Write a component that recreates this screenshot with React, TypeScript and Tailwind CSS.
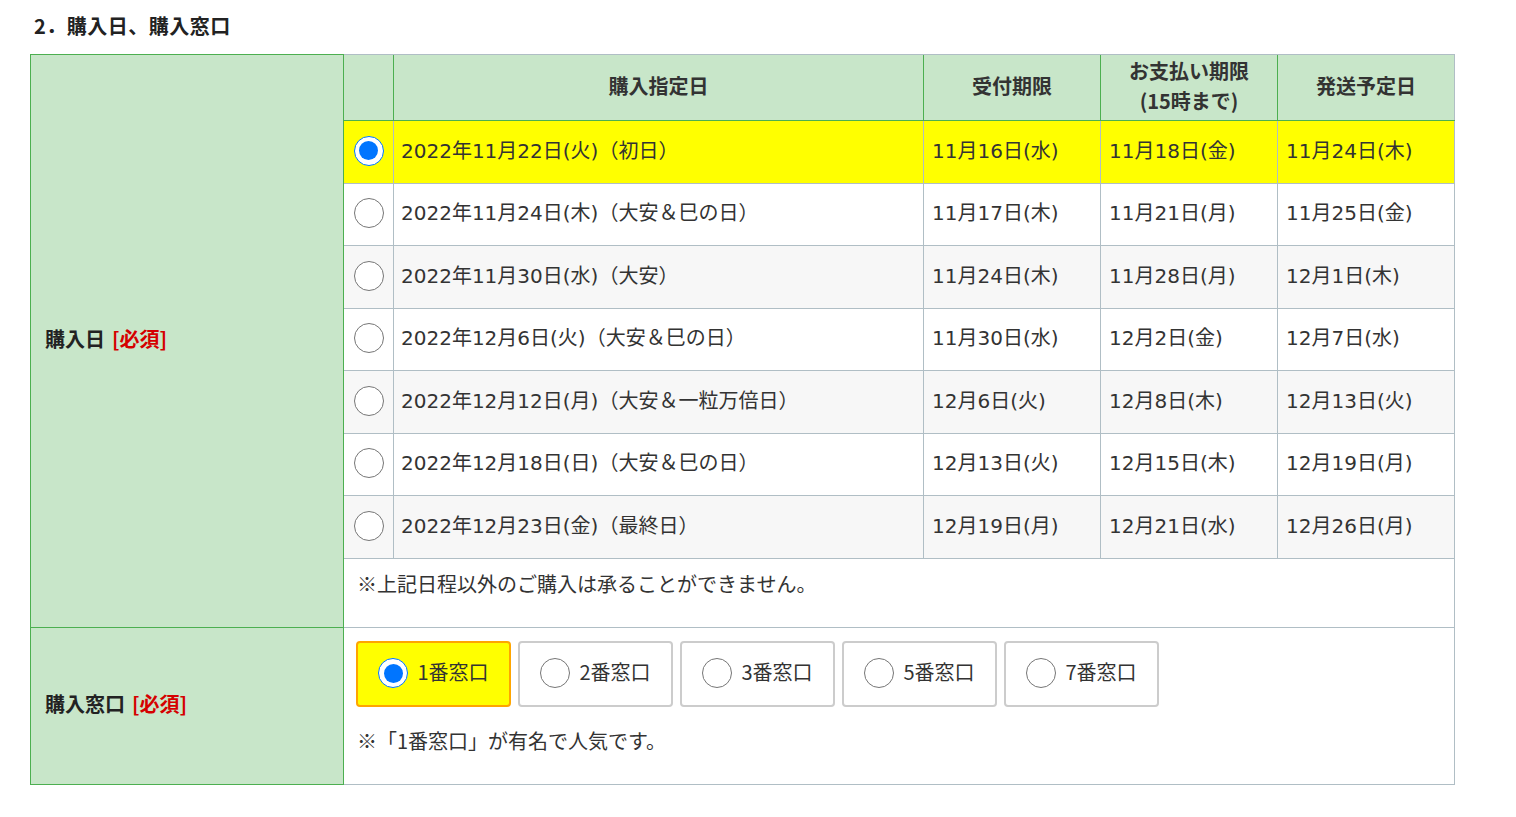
import React from "react";

const FONT = { fontFamily: '"Noto Sans CJK JP", "Noto Sans", sans-serif' };
const CELLFONT = { fontFamily: '"DejaVu Sans", "Noto Sans CJK JP", sans-serif' };

function Radio({ checked }: { checked: boolean }) {
  if (checked) {
    return (
      <div className="w-[30px] h-[30px] rounded-full border-[1.5px] border-[#0075ff] bg-white flex items-center justify-center shrink-0">
        <div className="w-[19px] h-[19px] rounded-full bg-[#0075ff]" />
      </div>
    );
  }
  return <div className="w-[30px] h-[30px] rounded-full border-[1.5px] border-[#767676] bg-white shrink-0" />;
}

const rows = [
  { d: "2022年11月22日(火)（初日）", a: "11月16日(水)", b: "11月18日(金)", c: "11月24日(木)", h: "h-[63px]", bg: "bg-[#ffff00]", sel: true },
  { d: "2022年11月24日(木)（大安＆巳の日）", a: "11月17日(木)", b: "11月21日(月)", c: "11月25日(金)", h: "h-[62px]", bg: "bg-white", sel: false },
  { d: "2022年11月30日(水)（大安）", a: "11月24日(木)", b: "11月28日(月)", c: "12月1日(木)", h: "h-[63px]", bg: "bg-[#f7f7f7]", sel: false },
  { d: "2022年12月6日(火)（大安＆巳の日）", a: "11月30日(水)", b: "12月2日(金)", c: "12月7日(水)", h: "h-[62px]", bg: "bg-white", sel: false },
  { d: "2022年12月12日(月)（大安＆一粒万倍日）", a: "12月6日(火)", b: "12月8日(木)", c: "12月13日(火)", h: "h-[63px]", bg: "bg-[#f7f7f7]", sel: false },
  { d: "2022年12月18日(日)（大安＆巳の日）", a: "12月13日(火)", b: "12月15日(木)", c: "12月19日(月)", h: "h-[62px]", bg: "bg-white", sel: false },
  { d: "2022年12月23日(金)（最終日）", a: "12月19日(月)", b: "12月21日(水)", c: "12月26日(月)", h: "h-[63px]", bg: "bg-[#f7f7f7]", sel: false },
];

const windows = ["1番窓口", "2番窓口", "3番窓口", "5番窓口", "7番窓口"];

export default function App() {
  return (
    <div className="bg-white w-[1516px] h-[817px] text-[#333]" style={FONT}>
      <div className="pt-[11px] pl-[34px] text-[20px] font-bold leading-[30px] text-[#222] tracking-[0.5px]">2．購入日、購入窓口</div>
      <div className="ml-[30px] mt-[13px] w-[1425px] flex flex-col">
        {/* Row A */}
        <div className="flex">
          <div className="w-[314px] border border-[#4caf50] bg-[#c8e6c9] flex items-center pl-[14px] pb-[4px] text-[20px] font-bold text-[#222]">
            購入日<span className="ml-[7px] text-[#d50000]">[必須]</span>
          </div>
          <div className="w-[1111px] flex flex-col border-t border-[#b0bec5] text-[20px]">
            <div className="flex h-[66px] bg-[#c8e6c9] border-b border-[#4caf50] font-bold text-[#333]">
              <div className="w-[50px] border-r border-[#4caf50]" />
              <div className="w-[530px] border-r border-[#4caf50] flex items-center justify-center pb-[4px]">購入指定日</div>
              <div className="w-[177px] border-r border-[#4caf50] flex items-center justify-center pb-[4px]">受付期限</div>
              <div className="w-[177px] border-r border-[#4caf50] flex flex-col items-center justify-center leading-[30px] pb-[4px]">
                <span>お支払い期限</span>
                <span>(15時まで)</span>
              </div>
              <div className="w-[177px] border-r border-[#b0bec5] flex items-center justify-center pb-[4px]">発送予定日</div>
            </div>
            {rows.map((r, i) => (
              <div key={i} className={`flex ${r.h} ${r.bg} border-b border-[#b0bec5]`}>
                <div className="w-[50px] border-r border-[#b0bec5] flex items-center justify-center pb-[3px]">
                  <Radio checked={r.sel} />
                </div>
                <div className="w-[530px] border-r border-[#b0bec5] flex items-center pl-[7px] pb-[3px]" style={CELLFONT}>{r.d}</div>
                <div className="w-[177px] border-r border-[#b0bec5] flex items-center pl-[8px] pb-[3px]" style={CELLFONT}>{r.a}</div>
                <div className="w-[177px] border-r border-[#b0bec5] flex items-center pl-[8px] pb-[3px]" style={CELLFONT}>{r.b}</div>
                <div className="w-[177px] border-r border-[#b0bec5] flex items-center pl-[8px] pb-[3px]" style={CELLFONT}>{r.c}</div>
              </div>
            ))}
            <div className="h-[69px] border-b border-r border-[#b0bec5] bg-white pl-[13px] pt-[10px] leading-[30px]">
              ※上記日程以外のご購入は承ることができません。
            </div>
          </div>
        </div>
        {/* Row B */}
        <div className="flex">
          <div className="w-[314px] h-[157px] border-x border-b border-[#4caf50] bg-[#c8e6c9] flex items-center pl-[14px] pb-[4px] text-[20px] font-bold text-[#222]">
            購入窓口<span className="ml-[7px] text-[#d50000]">[必須]</span>
          </div>
          <div className="w-[1111px] h-[157px] border-b border-r border-[#b0bec5] bg-white text-[20px] pl-[12px] pt-[13px]">
            <div className="flex gap-[7px]">
              {windows.map((w, i) => (
                <div
                  key={w}
                  className={`w-[155px] h-[66px] rounded-[4px] border-2 flex items-center justify-center gap-[9px] pb-[2px] ${
                    i === 0 ? "bg-[#ffff00] border-[#ffa500]" : "bg-white border-[#cccccc]"
                  }`}
                >
                  <Radio checked={i === 0} />
                  <span className="pb-[2px]">{w}</span>
                </div>
              ))}
            </div>
            <div className="mt-[19px] pl-[1px] leading-[30px]">※「1番窓口」が有名で人気です。</div>
          </div>
        </div>
      </div>
    </div>
  );
}
